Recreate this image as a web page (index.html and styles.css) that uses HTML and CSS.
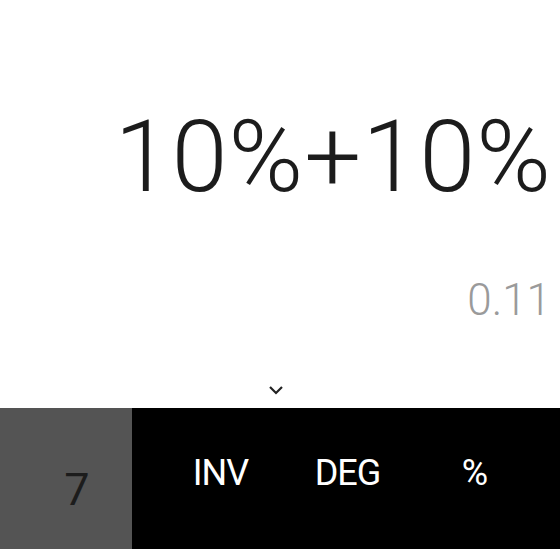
FILE: index.html
```html
<!DOCTYPE html>
<html lang="en">
<head>
    <meta charset="UTF-8">
    <title>Calculator</title>
    <link rel="stylesheet" href="styles.css">
</head>
<body>
    <div class="display">
        <div class="formula">10%+10%</div>
        <div class="result">0.11</div>
        <div class="handle">
            <svg width="16" height="10" viewBox="0 0 16 10">
                <path d="M2 2 L8 8 L14 2" fill="none" stroke="#222" stroke-width="2.2"/>
            </svg>
        </div>
    </div>

    <div class="pad">
        <div class="numbers">
            <span class="digit">7</span>
        </div>
        <div class="advanced">
            <span class="key">INV</span>
            <span class="key">DEG</span>
            <span class="key">%</span>
        </div>
    </div>
</body>
</html>
```

FILE: styles.css
```css
* {
    box-sizing: border-box;
}

body {
    margin: 0;
    width: 560px;
    height: 549px;
    overflow: hidden;
    background: #fff;
    font-family: Roboto, "Noto Sans", sans-serif;
}

.display {
    height: 408px;
    display: flex;
    flex-direction: column;
    align-items: flex-end;
    padding-right: 9px;
}

.formula {
    margin-top: 92px;
    font-size: 101px;
    font-weight: 300;
    line-height: 130px;
    letter-spacing: 1px;
    margin-right: -1px;
    color: #1c1c1c;
}

.result {
    margin-top: 52px;
    font-size: 44px;
    font-weight: 300;
    line-height: 52px;
    color: #9a9a9a;
}

.handle {
    align-self: center;
    margin-top: 59px;
    line-height: 0;
}

.pad {
    height: 141px;
    display: flex;
    background: #000;
}

.numbers {
    width: 132px;
    background: #545454;
    display: flex;
    justify-content: center;
    padding-top: 52px;
    padding-left: 22px;
}

.digit {
    font-size: 45px;
    line-height: 60px;
    color: #1c1c1c;
}

.advanced {
    display: flex;
    padding-left: 25px;
    padding-top: 40px;
}

.key {
    width: 127px;
    text-align: center;
    color: #fff;
    font-size: 36px;
    line-height: 50px;
    letter-spacing: -1px;
}
```
